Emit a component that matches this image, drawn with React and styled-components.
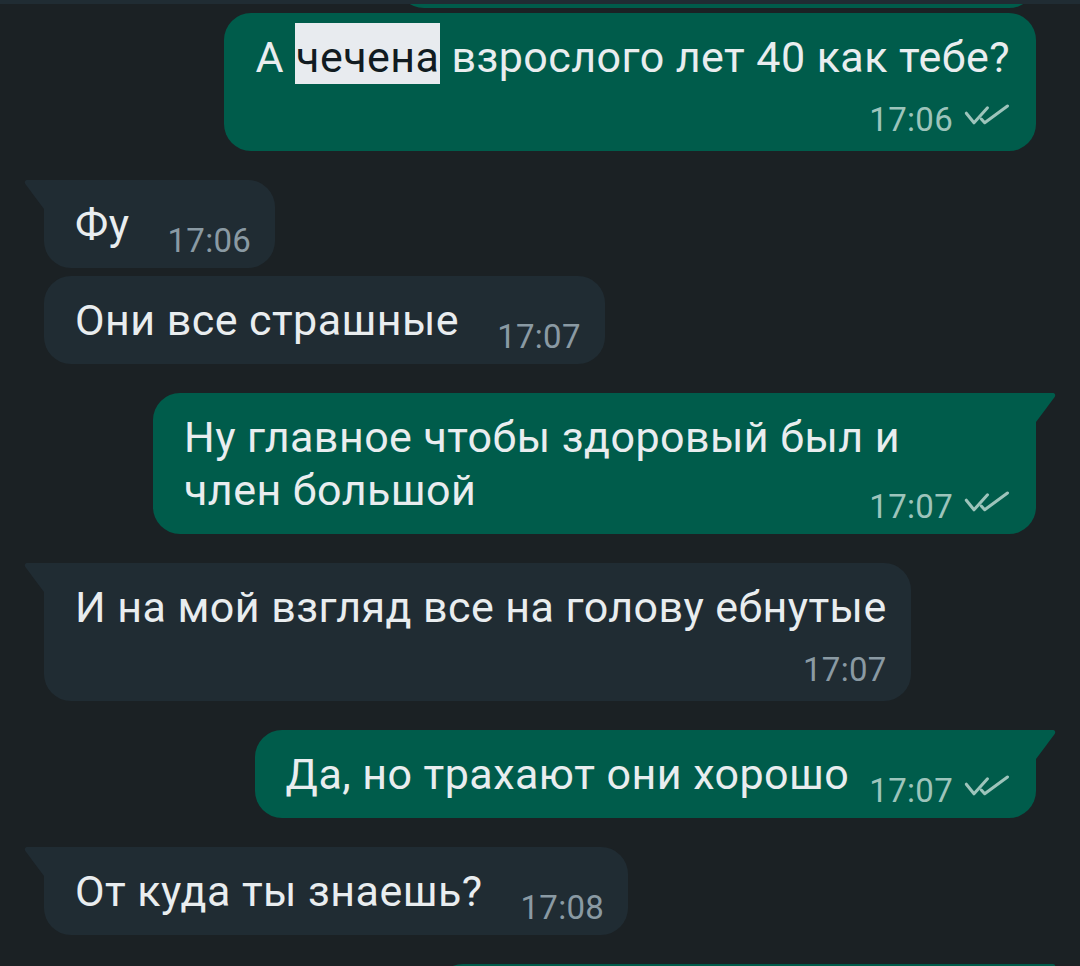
import React from 'react';
import styled, { createGlobalStyle } from 'styled-components';

const GlobalStyle = createGlobalStyle`
  html, body {
    margin: 0;
    padding: 0;
    background: #1b2124;
  }
  body {
    font-family: Roboto, "Noto Sans", "Liberation Sans", sans-serif;
    -webkit-font-smoothing: antialiased;
  }
  * { box-sizing: border-box; }
`;

const OUT_BG = '#005c4b';
const IN_BG = '#202c33';

const Screen = styled.div`
  width: 1080px;
  height: 966px;
  overflow: hidden;
  background: #1b2124;
  display: flex;
  flex-direction: column;
`;

const TopBar = styled.div`
  flex: none;
  height: 4px;
  background: #202c33;
  position: relative;
  z-index: 1;
`;

const Viewport = styled.div`
  flex: 1;
  overflow: hidden;
`;

const List = styled.div`
  display: flex;
  flex-direction: column;
  padding: 0 44px;
  margin-top: ${p => -p.$scrollTop}px;
`;

const Row = styled.div`
  display: flex;
  justify-content: ${p => (p.$out ? 'flex-end' : 'flex-start')};
  margin-top: ${p => p.$gap}px;
`;

const Bubble = styled.div`
  position: relative;
  display: flow-root;
  max-width: 883px;
  ${p => p.$fill && 'width: 883px;'}
  padding: 18px ${p => (p.$out ? 26 : 24)}px 11px 31px;
  border-radius: 27px;
  ${p => p.$tail && (p.$out ? 'border-top-right-radius: 0;' : 'border-top-left-radius: 0;')}
  background: ${p => (p.$out ? OUT_BG : IN_BG)};
  color: #e9edef;
  font-size: 43px;
  letter-spacing: 0.45px;
  line-height: 53px;
  white-space: pre-line;
`;

const GhostBubble = styled(Bubble)`
  width: ${p => p.$w}px;
  height: 89px;
`;

const Tail = styled.svg`
  position: absolute;
  top: 0;
  width: 20px;
  height: 29px;
  ${p => (p.$out ? 'right: -20px; transform: scaleX(-1);' : 'left: -20px;')}
  fill: ${p => (p.$out ? OUT_BG : IN_BG)};
`;

const Mark = styled.span`
  background: #e8ebef;
  color: #111b21;
  padding: 9px 1px 2px;
`;

const Meta = styled.span`
  display: flex;
  justify-content: flex-end;
  align-items: flex-start;
  gap: 11px;
  ${p =>
    p.$below
      ? 'margin-top: 20px; margin-bottom: 4px;'
      : `float: right; margin-top: 27px; margin-left: ${p.$out ? 20 : 38}px;`}
  font-size: 33px;
  letter-spacing: 0.3px;
  line-height: 32px;
  color: ${p => (p.$out ? '#9dc4bb' : '#8a9aa3')};
  white-space: nowrap;
`;

const Checks = styled.svg`
  flex: none;
  width: 46px;
  height: 21px;
  stroke: currentColor;
  fill: none;
  stroke-width: 3;
  stroke-linecap: round;
  stroke-linejoin: round;
`;

const DoubleCheck = () => (
  <Checks viewBox="0 0 46 21">
    <polyline points="2.3,9.2 10,18.8 23.5,3.8" />
    <polyline points="17.3,15 20.7,18.8 43.5,2" />
  </Checks>
);

const TailShape = ({ out }) => (
  <Tail $out={out} viewBox="0 0 20 29">
    <path d="M20 0 V29 L1.3 3.9 C0.2 2.3 0.9 0 3.2 0 Z" />
  </Tail>
);

const messages = [
  {
    out: true,
    gap: 5,
    below: true,
    time: '17:06',
    text: (
      <>
        А <Mark>чечена</Mark> взрослого лет 40 как тебе?
      </>
    ),
  },
  { out: false, tail: true, time: '17:06', text: 'Фу' },
  { out: false, time: '17:07', text: 'Они все страшные' },
  {
    out: true,
    tail: true,
    fill: true,
    time: '17:07',
    text: 'Ну главное чтобы здоровый был и\nчлен большой',
  },
  {
    out: false,
    tail: true,
    below: true,
    time: '17:07',
    text: 'И на мой взгляд все на голову ебнутые',
  },
  { out: true, tail: true, time: '17:07', text: 'Да, но трахают они хорошо' },
  { out: false, tail: true, time: '17:08', text: 'От куда ты знаешь?' },
];

const Message = ({ m }) => (
  <Row $out={m.out} $gap={m.gap ?? (m.tail ? 29 : 8)}>
    <Bubble $out={m.out} $tail={m.tail} $fill={m.fill}>
      {m.tail && <TailShape out={m.out} />}
      <span>{m.text}</span>
      <Meta $out={m.out} $below={m.below}>
        <span>{m.time}</span>
        {m.out && <DoubleCheck />}
      </Meta>
    </Bubble>
  </Row>
);

export default function App() {
  return (
    <>
      <GlobalStyle />
      <Screen>
        <TopBar />
        <Viewport>
          <List $scrollTop={85}>
            <Row $out $gap={0}>
              <GhostBubble $out $w={639} />
            </Row>
            {messages.map((m, i) => (
              <Message key={i} m={m} />
            ))}
            <Row $out $gap={29}>
              <GhostBubble $out $tail $w={600}>
                <TailShape out />
              </GhostBubble>
            </Row>
          </List>
        </Viewport>
      </Screen>
    </>
  );
}
